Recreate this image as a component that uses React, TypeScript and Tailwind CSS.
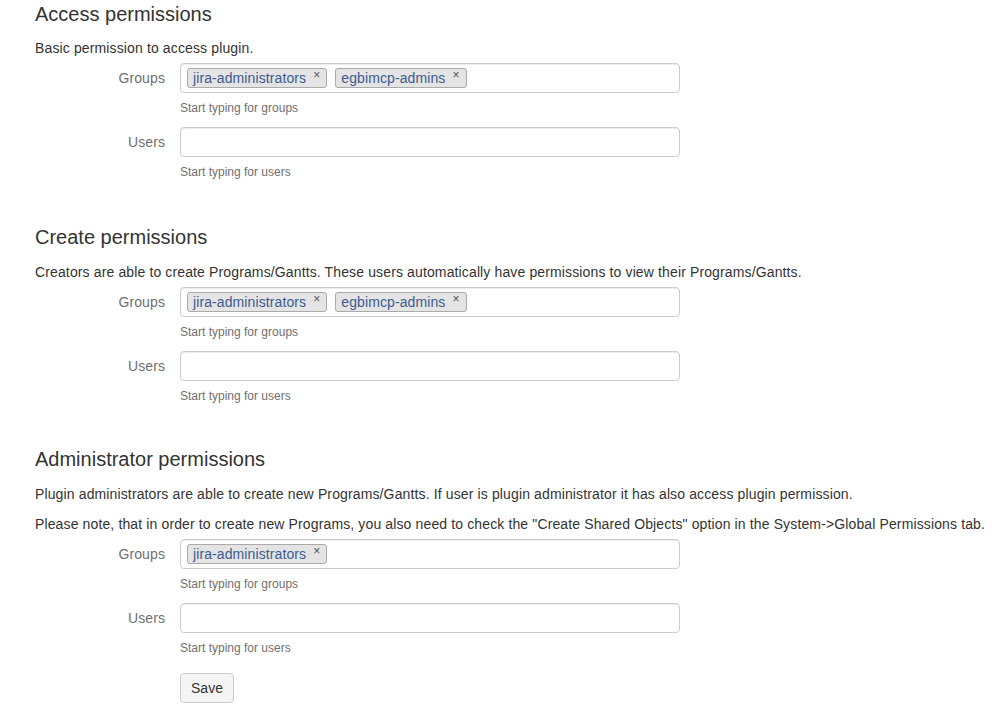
const sections = [
  {
    title: "Access permissions",
    notes: ["Basic permission to access plugin."],
    groups: ["jira-administrators", "egbimcp-admins"],
    gap: "",
  },
  {
    title: "Create permissions",
    notes: [
      "Creators are able to create Programs/Gantts. These users automatically have permissions to view their Programs/Gantts.",
    ],
    groups: ["jira-administrators", "egbimcp-admins"],
    gap: "mt-[45px]",
  },
  {
    title: "Administrator permissions",
    notes: [
      "Plugin administrators are able to create new Programs/Gantts. If user is plugin administrator it has also access plugin permission.",
      'Please note, that in order to create new Programs, you also need to check the "Create Shared Objects" option in the System->Global Permissions tab.',
    ],
    groups: ["jira-administrators"],
    gap: "mt-[43px]",
  },
];

const Chip = ({ name }: { name: string }) => (
  <span className="flex items-center h-[20px] pl-[5px] pr-[6px] bg-[#e4e4e4] border border-[#aaaaaa] rounded-[3px] text-[14px] leading-[18px] tracking-[0.1px] text-[#3f5b91]">
    {name}
    <span className="ml-[7px] text-[12px] leading-none text-[#555] relative -top-[3px]">×</span>
  </span>
);

const Field = ({ label, help, chips }: { label: string; help: string; chips?: string[] }) => (
  <div className="mb-[10px]">
    <div className="flex items-center">
      <label className="w-[130px] text-right text-[14px] tracking-[0.1px] text-[#707070]">{label}</label>
      <div className="ml-[15px] w-[500px] h-[30px] border border-[#cccccc] rounded-[4px] bg-white shadow-[inset_0_1px_1px_rgba(0,0,0,0.075)] flex items-center gap-[8px] pl-[6px]">
        {chips?.map((c) => (
          <Chip key={c} name={c} />
        ))}
      </div>
    </div>
    <div className="ml-[145px] mt-[7px] text-[12px] leading-[17px] text-[#707070]">{help}</div>
  </div>
);

export default function App() {
  return (
    <div
      className="min-h-screen bg-white text-[#333333] pl-[35px] pt-[3px]"
      style={{ fontFamily: '"Liberation Sans", Arial, sans-serif' }}
    >
      {sections.map((s, i) => (
        <section key={s.title} className={s.gap}>
          <h3 className={`text-[20px] leading-[22px] font-normal ${i === 0 ? "mb-[13px]" : "mb-[14px]"}`}>
            {s.title}
          </h3>
          {s.notes.map((n, j) => (
            <p
              key={j}
              className={`text-[14px] leading-[20px] tracking-[0.13px] whitespace-nowrap ${
                j === s.notes.length - 1 ? "mb-[5px]" : "mb-[10px]"
              }`}
            >
              {n}
            </p>
          ))}
          <Field label="Groups" help="Start typing for groups" chips={s.groups} />
          <Field label="Users" help="Start typing for users" />
        </section>
      ))}
      <div className="ml-[145px] mt-[16px]">
        <button className="w-[54px] h-[30px] bg-[#f5f5f5] border border-[#cccccc] rounded-[4px] text-[14px] text-[#333]">
          Save
        </button>
      </div>
    </div>
  );
}
